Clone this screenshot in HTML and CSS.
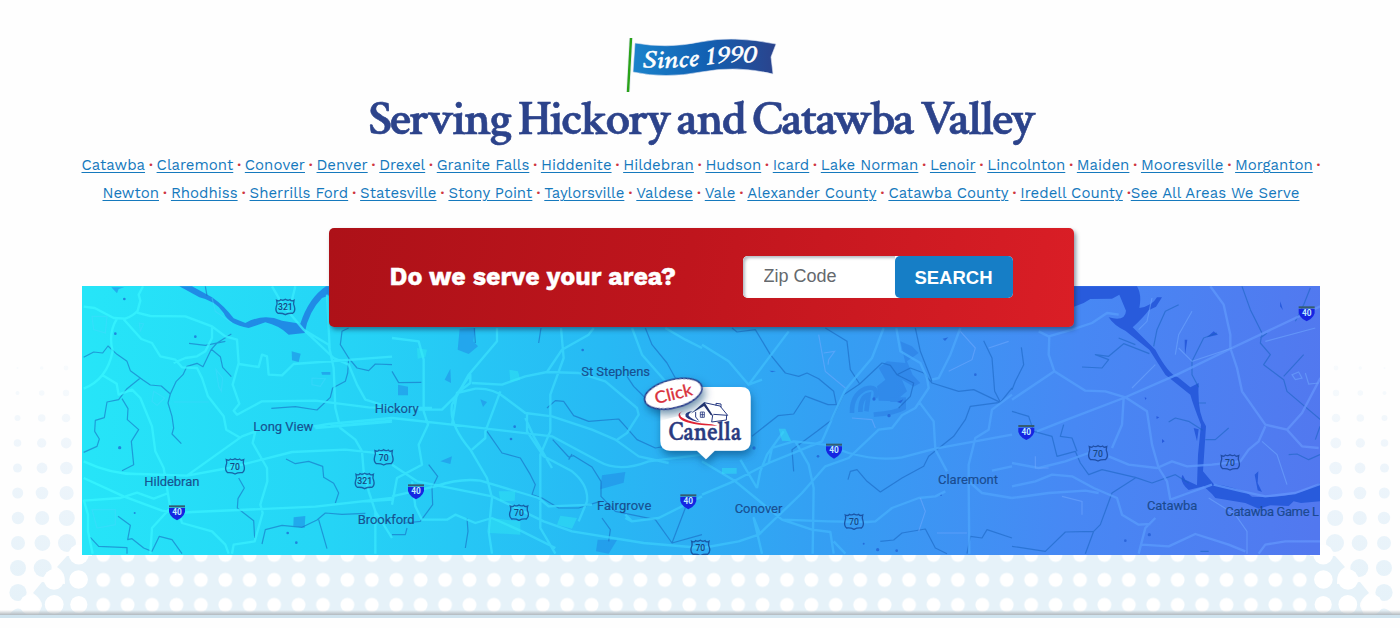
FILE: index.html
```
<!DOCTYPE html>
<html lang="en">
<head>
<meta charset="utf-8">
<title>Areas We Serve</title>
<link rel="stylesheet" href="styles.css">
</head>
<body>
<main class="page">
<svg class="halftone" viewBox="0 0 1400 628" aria-hidden="true">
  <defs>
    <linearGradient id="dotFade" x1="0" y1="360" x2="0" y2="600" gradientUnits="userSpaceOnUse"><stop offset="0" stop-color="#f8fbfd"/><stop offset=".4" stop-color="#eef5fb"/><stop offset="1" stop-color="#e6f2f9"/></linearGradient>
    <pattern id="holes" x="91" y="542.4" width="24.42" height="25" patternUnits="userSpaceOnUse"><circle cx="12.2" cy="12.5" r="6.9" fill="#fff"/></pattern>
    <g id="edgeDots">
      <g fill="url(#dotFade)">
      <circle cx="17.5" cy="368" r="1"/><circle cx="17.5" cy="393" r="2"/><circle cx="17.5" cy="418" r="3"/><circle cx="17.5" cy="443" r="3.8"/><circle cx="17.5" cy="468" r="4.5"/><circle cx="17.7" cy="493" r="5.5"/><circle cx="18" cy="518" r="6.2"/><circle cx="18" cy="543" r="7"/><circle cx="18" cy="568" r="8"/><circle cx="18" cy="592.5" r="8.6"/>
      <circle cx="41.7" cy="368" r="1.8"/><circle cx="41.7" cy="393" r="2.8"/><circle cx="41.7" cy="418" r="3.8"/><circle cx="41.7" cy="443" r="4.7"/><circle cx="42" cy="468" r="5.4"/><circle cx="42" cy="493" r="6.3"/><circle cx="42.2" cy="518" r="7"/><circle cx="42.4" cy="543" r="7.9"/><circle cx="42.7" cy="568" r="9"/>
      <circle cx="66" cy="368" r="2.4"/><circle cx="66" cy="393" r="3.2"/><circle cx="66" cy="418" r="4.3"/><circle cx="66.2" cy="443" r="5.4"/><circle cx="66.4" cy="468" r="6.3"/><circle cx="66.6" cy="493" r="7.1"/><circle cx="66.8" cy="518" r="8"/><circle cx="67" cy="543" r="9"/>
      </g>
      <path fill="#e6f2f9" d="M67 556L57 567Q66 572 65 584L42 582L33 593Q42 599 42 606L38 615H120V556Z"/>
      <path fill="#e6f2f9" d="M9 615Q18 602 27 615Z"/>
      <circle cx="54" cy="579.5" r="10.2" fill="#fff"/><circle cx="78.6" cy="579.5" r="9.3" fill="#fff"/><circle cx="30" cy="604.5" r="10.2" fill="#fff"/><circle cx="54.2" cy="604.5" r="9.4" fill="#fff"/><circle cx="78.8" cy="604.5" r="8.6" fill="#fff"/><circle cx="78.8" cy="554.5" r="10" fill="#fff"/>
    </g>
  </defs>
  <rect x="92" y="555" width="1218" height="60" fill="#e6f2f9"/>
  <use href="#edgeDots"/><use href="#edgeDots" transform="matrix(-1 0 0 1 1402 0)"/>
  <rect x="92" y="555" width="1218" height="60" fill="url(#holes)"/>
</svg>

<svg class="flag" viewBox="0 0 152 58" role="img" aria-label="Since 1990">
  <defs><linearGradient id="flagBlue"><stop stop-color="#1b83cb"/><stop offset=".5" stop-color="#1261b3"/><stop offset="1" stop-color="#2b438c"/></linearGradient><path id="wave" d="M16 31.5Q50 33 78 29T133 27"/></defs>
  <path d="M5 2L2 56" stroke="#e3e8f0" stroke-width="4"/><path d="M5 2L2 56" stroke="#2aa318" stroke-width="2.4"/>
  <path d="M9 7Q41 13 74 6T150 8L145 21L147 38Q111 29 75 36T7 36Z" fill="url(#flagBlue)" stroke="#dce3f2" stroke-width=".6"/>
  <text class="flag-text"><textPath href="#wave" textLength="114" lengthAdjust="spacingAndGlyphs">Since 1990</textPath></text>
</svg>
<h1 class="title">Serving Hickory and Catawba Valley</h1>
<nav class="areas">
  <div class="area-row row-a"><a href="#">Catawba</a><i>·</i><a href="#">Claremont</a><i>·</i><a href="#">Conover</a><i>·</i><a href="#">Denver</a><i>·</i><a href="#">Drexel</a><i>·</i><a href="#">Granite Falls</a><i>·</i><a href="#">Hiddenite</a><i>·</i><a href="#">Hildebran</a><i>·</i><a href="#">Hudson</a><i>·</i><a href="#">Icard</a><i>·</i><a href="#">Lake Norman</a><i>·</i><a href="#">Lenoir</a><i>·</i><a href="#">Lincolnton</a><i>·</i><a href="#">Maiden</a><i>·</i><a href="#">Mooresville</a><i>·</i><a href="#">Morganton</a><i>·</i></div>
  <div class="area-row row-b"><a href="#">Newton</a><i>·</i><a href="#">Rhodhiss</a><i>·</i><a href="#">Sherrills Ford</a><i>·</i><a href="#">Statesville</a><i>·</i><a href="#">Stony Point</a><i>·</i><a href="#">Taylorsville</a><i>·</i><a href="#">Valdese</a><i>·</i><a href="#">Vale</a><i>·</i><a href="#">Alexander County</a><i>·</i><a href="#">Catawba County</a><i>·</i><a href="#">Iredell County</a><i class="tight">·</i><a href="#">See All Areas We Serve</a></div>
</nav>
<form class="lookup">
  <label class="question" for="zip">Do we serve your area?</label>
  <div class="field"><input id="zip" class="zip" type="text" placeholder="Zip Code"><button class="search" type="button">SEARCH</button></div>
</form>

<svg class="map" viewBox="0 4 3714 807" preserveAspectRatio="none" role="img" aria-label="Service area map">
  <defs>
    <linearGradient id="land" x1="0" y1="330" x2="3714" y2="560" gradientUnits="userSpaceOnUse"><stop stop-color="#26e5f8"/><stop offset=".2" stop-color="#25d5f6"/><stop offset=".42" stop-color="#27b9f4"/><stop offset=".6" stop-color="#349ff3"/><stop offset=".8" stop-color="#4788f4"/><stop offset="1" stop-color="#5278ef"/></linearGradient>
    <linearGradient id="road" x1="0" y1="0" x2="3714" y2="0" gradientUnits="userSpaceOnUse"><stop stop-color="#36f6ff"/><stop offset=".3" stop-color="#38e2fd"/><stop offset=".45" stop-color="#38cdfb"/><stop offset=".6" stop-color="#40b4fc"/><stop offset=".75" stop-color="#4fa0fc"/><stop offset="1" stop-color="#6492fb"/></linearGradient>
    <linearGradient id="road2" href="#road" gradientTransform="translate(-930 0)"/>
    <linearGradient id="road3" href="#road" gradientTransform="translate(-1860 0)"/>
    <linearGradient id="road4" href="#road" gradientTransform="translate(-2790 0)"/>
    <filter id="soft" x="-20%" y="-20%" width="140%" height="150%"><feDropShadow dx="4" dy="15" stdDeviation="12" flood-color="#06406e" flood-opacity=".55"/></filter>
    <g id="us"><path d="M-26-20Q-18-16-14-22Q-6-18 0-23Q6-18 14-22Q18-16 26-20Q23-9 27-2Q31 12 22 19Q9 18 0 23Q-9 18-22 19Q-31 12-27-2Q-23-9-26-20Z" fill="none" stroke="#123c8c" stroke-opacity=".75" stroke-width="4"/></g>
    <g id="interstate"><path d="M-24-20H24V-14H-24Z" fill="#355d70"/><path d="M-24-12H24Q28 12 0 25Q-28 12-24-12Z" fill="#1525e2"/><text class="hwy" y="9">40</text></g>
  </defs>
  <rect y="4" width="3714" height="807" fill="url(#land)"/>

  <g class="water-fill">
    <path d="M292 5H330L390 38Q425 62 455 101L490 115Q545 84 600 108L655 117Q680 40 732 5H760V25L720 40Q680 80 668 145L620 150Q590 122 550 113L500 130Q440 120 425 85Q400 48 352 38Z"/>
    <path d="M88 8L105 26L110 13L127 8Z M629 200L656 207L650 232L630 227Z M635 698L670 694L668 730L634 724Z M718 262H745V270H720Z" opacity=".6"/>
    <g transform="translate(930 0)" opacity=".55"><path d="M203 132L250 130L244 170L258 185L230 208L197 195Z M158 285L175 252L177 295Z M145 530L180 515L175 538Z M18 300L48 306V332H18Z M630 572L700 562L695 594L625 614Z M617 765L675 766L650 807L612 800Z M265 344L285 352L273 367Z"/></g>
    <g transform="translate(2790 0)" class="lake">
      <path d="M184 5H375Q390 30 382 70Q420 65 435 38H450L432 66L410 77Q393 100 362 128L430 195Q470 270 498 278L535 308L560 295Q555 385 582 425L573 560L605 598Q690 610 720 636Q845 645 924 594V650L867 655L845 650L830 664L775 662L740 672L700 655L610 640L600 628L575 605L530 616Q500 590 512 570L520 585L555 602L558 510L567 420Q545 365 535 330L460 270L412 195L340 138Q308 125 290 98Q340 112 342 78L322 30L300 42L235 43L215 55L184 67Z"/>
      <path d="M545 430L560 434L555 470Z M728 570L739 560L737 595L750 622L737 617Z M605 140L618 150L585 158Z M518 165H526L519 212Z M805 50L813 77L804 65Z M450 463L458 470L450 475Z M433 395L442 398L434 403Z M398 338L404 340L400 346Z"/>
    </g>
    <g transform="translate(1860 0)" opacity=".35" fill="#226fdc"><path d="M595 170L630 185L650 205L615 230L632 270L655 295L635 306L600 285L615 320L580 350L530 348L525 305L550 285L530 250L555 230L610 235Z"/><path d="M450 385Q448 332 490 312Q530 300 520 340M475 382Q475 335 500 330L493 380M515 390Q580 385 605 370V345L565 345" fill="none" stroke="#226fdc" stroke-width="14"/></g>
  </g>
  <g class="ponds"><circle cx="127" cy="43" r="4"/><circle cx="100" cy="147" r="4"/><circle cx="340" cy="156" r="4"/><circle cx="113" cy="489" r="5"/><circle cx="158" cy="685" r="3"/><circle cx="617" cy="745" r="4"/><circle cx="643" cy="774" r="4"/><circle cx="1298" cy="426" r="4"/><circle cx="1287" cy="463" r="4"/><circle cx="1502" cy="196" r="4"/><circle cx="2016" cy="490" r="5"/><circle cx="2208" cy="515" r="4"/><circle cx="2376" cy="343" r="5"/><path d="M2062 258L2082 259L2070 263ZM2445 352L2464 344L2456 356ZM2582 162L2599 158L2589 169Z"/><circle cx="2421" cy="393" r="5"/><circle cx="2680" cy="270" r="4"/><circle cx="2387" cy="795" r="5"/><circle cx="2444" cy="798" r="4"/><circle cx="2345" cy="777" r="3"/><circle cx="2577" cy="631" r="3"/><circle cx="3130" cy="768" r="4"/><circle cx="3202" cy="750" r="5"/></g>

  <g class="creeks">
    <path d="M5 218L35 202L62 205L78 184L105 209L135 230L145 258L183 286L205 301L238 304L265 328L258 355L270 395L275 430L270 448L298 477M265 328L282 291L303 270L315 245L345 236L363 246L388 194L405 175L448 148M388 194L415 216L422 248L448 276M321 176L370 182L430 170M175 280L135 312L110 345L75 352L67 399L40 407L38 440L52 463L45 485L5 503M120 342L138 372L136 405L170 435L148 470L155 540L120 558M568 371L640 366L705 376L745 338L752 310L790 290L797 265L800 220L775 180L780 140L800 130M800 220L825 250L860 258L880 238L930 240M370 5L375 33M612 523L640 537L680 530L722 545L725 578L755 596L770 625L760 655M470 580L487 610L468 642L466 670L515 708L518 760M540 778L550 735L600 722L660 728L705 706L730 685L780 689L850 686M108 695L145 722L137 765L150 762L185 790L210 800L232 755L270 765L300 807M25 758L50 785L135 789V807M710 705L735 792"/>
    <g transform="translate(930 0)"><path d="M0 260L20 294L88 293M247 130L250 175M447 130L440 175M760 130L780 180L825 235L850 280M705 275L725 305L760 340M465 370L490 348L515 350L545 393L590 410L680 403L700 425L735 465L790 490L850 480M482 465L530 517L545 513L600 547L627 590V635L670 680L790 705L840 775L930 750M285 440L330 505L385 520L415 570L430 600L420 630L450 640L500 670H560L625 650M540 508L530 525M110 540L137 575L120 610L122 660L85 710L40 715M0 750L40 750L45 730M225 700L228 740L220 790M630 700L655 735L650 770M840 775L880 670"/></g>
    <g transform="translate(1860 0)"><path d="M90 130L105 142L160 135L205 210L250 265L290 275L315 265L350 282L395 320L403 360L378 360L320 338L310 334L275 388L228 393L150 455M370 130L435 170L445 255L473 298L540 235L565 242L585 270L625 250L665 265L690 295L770 320L815 315L895 353L930 310M473 298L425 330L390 405L345 440L270 495L275 560M585 270L635 295L625 335L590 370M640 130L655 200L690 290M845 168L870 220L878 320L895 353L805 365L790 405L755 455L680 515L665 545L600 580L535 622L495 590L465 555L445 560L438 585M535 770L575 766L600 745L670 733L700 790L735 807M795 807L805 755L840 760L855 735L930 760"/></g>
    <g transform="translate(2790 0)"><path d="M28 188L35 240L10 290L0 315M0 380L50 395L65 440L120 455L135 515L190 500L205 535L230 570L270 555L370 578L420 595L490 570L530 595M155 420L145 455L180 460L195 500M210 247L270 250L290 225L250 210L290 215L335 177L412 207M320 160L370 180M425 185L435 135L460 80L500 60M560 308L540 270L540 230L575 160L615 145M470 412L490 400L530 410L572 437M580 465H610L650 430M560 355H582M690 5L715 75L750 145L745 175L775 210L755 240L815 285L825 320L925 405M815 275L875 210M745 160L765 145M850 110L875 60L895 10M830 510L855 508L890 525L924 510M910 465L924 425M370 580L300 625L265 720L245 740L160 742L100 800L0 785M245 740L220 807M565 800L590 800"/></g>
  </g>

  <g class="roads">
    <path stroke="url(#road)" d="M5 66L38 70L95 100L130 102Q155 92 167 78L175 48L170 30L183 5M165 84L205 94L310 95L390 125L430 155L465 165L470 235L452 300L472 357L455 378L465 390L540 350L700 348L860 368L930 370M5 312Q75 285 92 200Q78 145 105 102M125 104L178 163L210 175L235 215L280 225L300 248L345 250L360 280L378 335L425 395L433 435L472 458M390 128V160L370 200L345 215L310 220L275 235M470 238L530 247L540 210L555 215L560 270L600 272L635 238L930 216M62 272L104 297L110 330L150 315L175 340L210 425L220 500L245 550L265 670M5 530Q90 570 170 568L315 573L480 455L520 440L512 475L555 550L556 590L535 660L542 685L518 770L455 780L450 807M315 573L440 550L630 502L790 495L930 510M695 425L740 418L930 400M700 430L930 411M5 580L125 635L240 678Q280 688 330 682M5 648L115 640L165 624L215 642L260 625M5 645L18 690V740L32 807M265 670L210 730L205 807M290 680L300 715L390 740L430 780L440 807M330 682L700 666L930 640M570 5L605 65L665 135L755 220L800 240L825 300L850 345L930 370M640 5L630 45M665 135L740 180L755 250L760 370L775 430L820 465L840 500L845 560M845 560L860 620L880 680L930 760M735 30L743 190M745 425L930 408M880 680V807M850 650L930 645"/>
    <g transform="translate(930 0)"><path stroke="url(#road2)" d="M0 370H120M80 375H120L150 375L190 335L235 270V295L195 325M0 400L180 420L480 455L620 530Q680 565 770 530L930 510M315 130V170L230 270L180 360Q170 420 235 495L285 580L300 640L290 740L300 807M180 420L195 325L250 312Q305 310 340 340L400 385L480 395L600 435L670 465L740 515L830 535M240 295L330 300L400 275L465 262L510 195L590 150L605 130M507 130L515 220L475 330V440L445 510L445 730L490 807M465 262L560 265L640 290L735 370L740 390L705 445L675 465M325 320L280 440V460L240 495M405 385V440L455 515L540 560Q590 600 585 650L560 710M0 160L80 170L95 225V380L108 420L80 480L90 540L15 580L0 660M0 540L75 590M0 635L130 605Q205 580 265 588L440 640L470 665L600 660M700 690L720 710L800 700L930 635M75 590L300 635L455 710L540 740L755 775L930 790M60 590L70 665L90 705L165 705L190 690L250 715L300 700L390 740L490 790M400 400L425 455L480 550M720 130L750 210L820 290M820 130L880 165L930 190M720 710L700 700"/></g>
    <g transform="translate(1860 0)"><path stroke="url(#road3)" d="M0 180L80 230L140 300L260 140M140 300L180 285M0 530L100 590L240 705L330 735L385 742L395 807M0 630L95 590L200 535L360 470L400 380L430 315L510 220L545 130M200 535L210 490L275 470L370 480L440 505Q530 530 600 518L700 492L930 450M115 525L165 610M175 750L155 700L180 807M165 610L175 560L195 510L245 440M0 790L110 770L170 750L300 625L370 545L440 520L530 435L570 430L600 392L640 370L680 310L675 280L655 235L595 200L583 130M240 705L380 710L495 712L520 710L570 670L650 640L700 635L730 620M690 285L710 280L745 210L775 130M650 350L695 410L700 495L735 560M930 330L870 375L860 435L820 460L800 540V600L802 807M280 470L320 540L335 610L332 807M395 770L430 807M870 558L930 545M800 590L840 625L930 640"/></g>
    <g transform="translate(2790 0)"><path stroke="url(#road4)" d="M80 140L110 155L180 135L240 115L285 85L320 90M112 155L110 210L127 260L0 345M127 260L220 318L280 320L340 338L405 380L420 480L440 550L465 590L475 645M430 700L400 730L380 807M75 440L165 405L335 340L495 270L660 190L925 65M595 5L635 60L655 150V190L675 250L690 320L760 420L825 435L870 385L925 280M760 425L740 470L710 495L685 530L600 540L525 545L480 530L435 550L350 540L290 515M230 505L160 530L80 550L0 535M335 340L330 420L300 490M0 605L70 590L120 570L180 575L245 610L315 640L330 690L380 720L415 718M0 640L110 625L220 618L260 625M475 645L530 625L600 600M605 600L690 620L760 635L850 625L924 598M825 435L870 485L920 490M390 780L470 785L550 748L650 780L700 800M740 807L760 780L820 770H924"/></g>
  </g>
  <g class="lanes">
    <path d="M30 95H75L70 145L35 135ZM402 255L422 280L418 320L410 305ZM215 320L248 340L225 362L210 350ZM30 675H100V720L45 730ZM690 280L730 282L715 305L690 300ZM172 115L185 118L175 138ZM275 352H380M390 40L400 80L450 115"/>
    <path d="M2225 205L2258 200L2240 225L2238 240M2210 150L2230 260L2290 310M2635 140L2680 190L2670 225L2600 260M2720 190L2780 170M2310 400L2370 405L2380 430M2565 745H2655M2515 640L2530 680L2510 740M3170 135L3195 110L3210 40M3280 210L3290 150L3330 80M3290 190L3330 230L3450 190M3540 470L3585 510L3615 600M3630 270L3650 262L3660 280L3640 285ZM3670 265L3680 298L3710 295M3380 640L3460 690L3495 740V807M2860 515V550H2900M2940 635L3000 650V690M3150 310L3220 240M3550 170L3700 130"/>
  </g>
  <g class="parks"><path d="M1005 190L1035 195L1030 217L1007 222ZM1282 255L1308 260L1315 285L1285 292ZM1250 620L1300 620L1298 648L1255 650ZM1225 700L1315 710V750L1220 745ZM1435 693L1485 700L1470 732L1425 720ZM2090 432L2110 432L2128 470L2100 468ZM1920 550H1964V567H1920Z"/></g>

  <g class="places">
    <text x="878" y="384" textLength="132">Hickory</text><text x="514" y="440" textLength="180">Long View</text><text x="187" y="604" textLength="165">Hildebran</text><text x="827" y="719" textLength="171">Brookford</text><text x="1498" y="274" textLength="206">St Stephens</text><text x="1545" y="676" textLength="163">Fairgrove</text><text x="1958" y="685" textLength="143">Conover</text><text x="2568" y="599" textLength="180">Claremont</text><text x="3195" y="676" textLength="151">Catawba</text><text x="3430" y="695" textLength="281">Catawba Game L</text>
  </g>
  <g class="routes">
    <g transform="translate(610 67)"><use href="#us"/><text y="9">321</text></g><g transform="translate(459 545)"><use href="#us"/><text y="10">70</text></g><g transform="translate(905 518)"><use href="#us"/><text y="10">70</text></g><g transform="translate(848 589)"><use href="#us"/><text y="9">321</text></g><g transform="translate(1311 684)"><use href="#us"/><text y="10">70</text></g><g transform="translate(1855 790)"><use href="#us"/><text y="10">70</text></g><g transform="translate(2316 711)"><use href="#us"/><text y="10">70</text></g><g transform="translate(3048 506)"><use href="#us"/><text y="10">70</text></g><g transform="translate(3444 533)"><use href="#us"/><text y="10">70</text></g>
    <use href="#interstate" x="285" y="682"/><use href="#interstate" x="1002" y="619"/><use href="#interstate" x="1819" y="649"/><use href="#interstate" x="2256" y="497"/><use href="#interstate" x="2833" y="441"/><use href="#interstate" x="3674" y="85"/>
  </g>

  <g transform="translate(1659 255)">
    <path filter="url(#soft)" d="M105 52H318Q347 52 347 81V214Q347 243 318 243H239L213 269L186 243H105Q76 243 76 214V81Q76 52 105 52Z" fill="#fff"/>
    <path d="M174 124Q146 127 152 141Q165 154 200 158Q170 149 161 138Q160 130 174 124Z" fill="#283a82"/>
    <path d="M155 123Q127 125 138 141Q158 158 230 164L248 168Q162 168 137 149Q118 127 155 123Z" fill="#df2435"/>
    <path d="M182 127V142L190 152M233 137L230 157L274 151L275 136M243 108V101L258 103V113M208 99L255 109L278 137L235 134" fill="none" stroke="#283a82" stroke-width="3"/>
    <path d="M167 132L208 97L235 139L227 136L207 109L185 122Z" fill="#24336f"/><path d="M196 127H208V143H196ZM202 127V143M196 135H208" fill="none" stroke="#283a82" stroke-width="2.5"/>
    <text class="brand" x="101" y="210" textLength="218" lengthAdjust="spacingAndGlyphs">Canella</text>
    <g transform="rotate(-14 115 72)"><ellipse cx="115" cy="72" rx="88" ry="42" fill="#fff" stroke="#263e8c" stroke-width="5" filter="url(#soft)"/><text class="click" x="58" y="90" textLength="114" lengthAdjust="spacingAndGlyphs">Click</text></g>
  </g>
</svg>
<div class="page-end"></div>
</main>
</body>
</html>
```
FILE: styles.css
```
* { box-sizing: border-box; }
body { margin: 0; background: #fefefe; font-family: "Liberation Sans", sans-serif; }
.page { position: relative; height: 628px; overflow: hidden; display: flex; flex-direction: column; align-items: center; }
.halftone { position: absolute; inset: 0; width: 1400px; height: 628px; z-index: -1; }
.flag { width: 152px; height: 58px; margin: 36px 0 0 3px; flex: none; overflow: visible; }
.flag-text { font: italic 400 26px "Crimson Text", "Liberation Serif", serif; fill: #fff; stroke: #fff; stroke-width: .5; }
.title { margin: -1px 0 0 2px; height: 52px; font: 600 49px/52px "Crimson Text", "Liberation Serif", serif; letter-spacing: -2px; word-spacing: -.5px; color: #2c438b; white-space: nowrap; -webkit-text-stroke: .6px #2c438b; }
.areas { margin-top: 6px; font: 15px/28px "Work Sans", "Open Sans", sans-serif; color: #1579bd; }
.area-row { display: flex; justify-content: space-between; height: 28px; white-space: nowrap; }
.row-a { width: 1239px; margin-left: 2px; }
.row-b { width: 1197px; margin-left: 23px; }
.area-row a { color: #1579bd; text-decoration: underline; text-underline-offset: 2px; text-decoration-thickness: 1px; }
.area-row i { font-style: normal; font-weight: 600; color: #cf3540; }
.area-row .tight { margin-right: -4px; }
.lookup { position: relative; z-index: 2; width: 745px; height: 99px; margin: 21px 0 0 2px; padding: 0 61px 2px; display: flex; align-items: center; justify-content: space-between; flex: none; border-radius: 5px; background: linear-gradient(100deg, #ad1118, #bf151d 48%, #da1e26); box-shadow: 2px 3px 4px rgba(20, 50, 80, .5); }
.question { color: #fff; font: 700 25px/30px "Work Sans", Inter, sans-serif; white-space: nowrap; -webkit-text-stroke: .4px #fff; }
.field { width: 270px; height: 42px; display: flex; border-radius: 5px; background: #fff; }
.zip { width: 152px; border: 0; padding: 0 0 1px 21px; border-radius: 5px 0 0 5px; font: 18px "Liberation Sans", sans-serif; box-shadow: inset 2px 2px 3px #b5bdc4; background: #fff; }
.zip::placeholder { color: #65696d; opacity: 1; }
.search { width: 118px; border: 0; padding: 2px 0 0; border-radius: 5px; background: #167ec6; color: #fff; font: bold 18.5px "Liberation Sans", sans-serif; }
.map { width: 1238px; height: 269px; margin: -41px 0 0 2px; flex: none; display: block; }
.map text { font-family: Roboto, sans-serif; }
.water-fill { fill: #208be6; }
.lake { fill: #285bdc; }
.ponds { fill: #1d57cf; opacity: .65; }
.creeks path { fill: none; stroke: #1762bd; stroke-opacity: .55; stroke-width: 3.6; stroke-linejoin: round; }
.roads path { fill: none; stroke-width: 7; stroke-opacity: .8; stroke-linejoin: round; }
.lanes path { fill: none; stroke: #49d9ff; stroke-width: 3.5; stroke-opacity: .4; }
.lanes path + path { stroke: #71aaff; stroke-opacity: .55; }
.parks { fill: #31eef2; opacity: .4; }
.places text { font-size: 39px; fill: #164587; fill-opacity: .9; stroke: #164587; stroke-width: .5; }
.routes text { font-size: 26px; font-weight: 500; fill: #174783; text-anchor: middle; }
.routes .hwy, .hwy { font-size: 25px; font-weight: 700; fill: #bceaff; text-anchor: middle; }
.map .brand { font: 600 84px "Crimson Text", "Liberation Serif", serif; fill: #293a80; stroke: #293a80; stroke-width: 1.5; }
.map .click { font: 50px Lato, sans-serif; fill: #d9303b; stroke: #d9303b; stroke-width: 1; }
.page-end { width: 100%; height: 8px; margin-top: 55px; flex: none; background: linear-gradient(transparent, #b2b9be 5px, #cfe3ee 5px); }
```
